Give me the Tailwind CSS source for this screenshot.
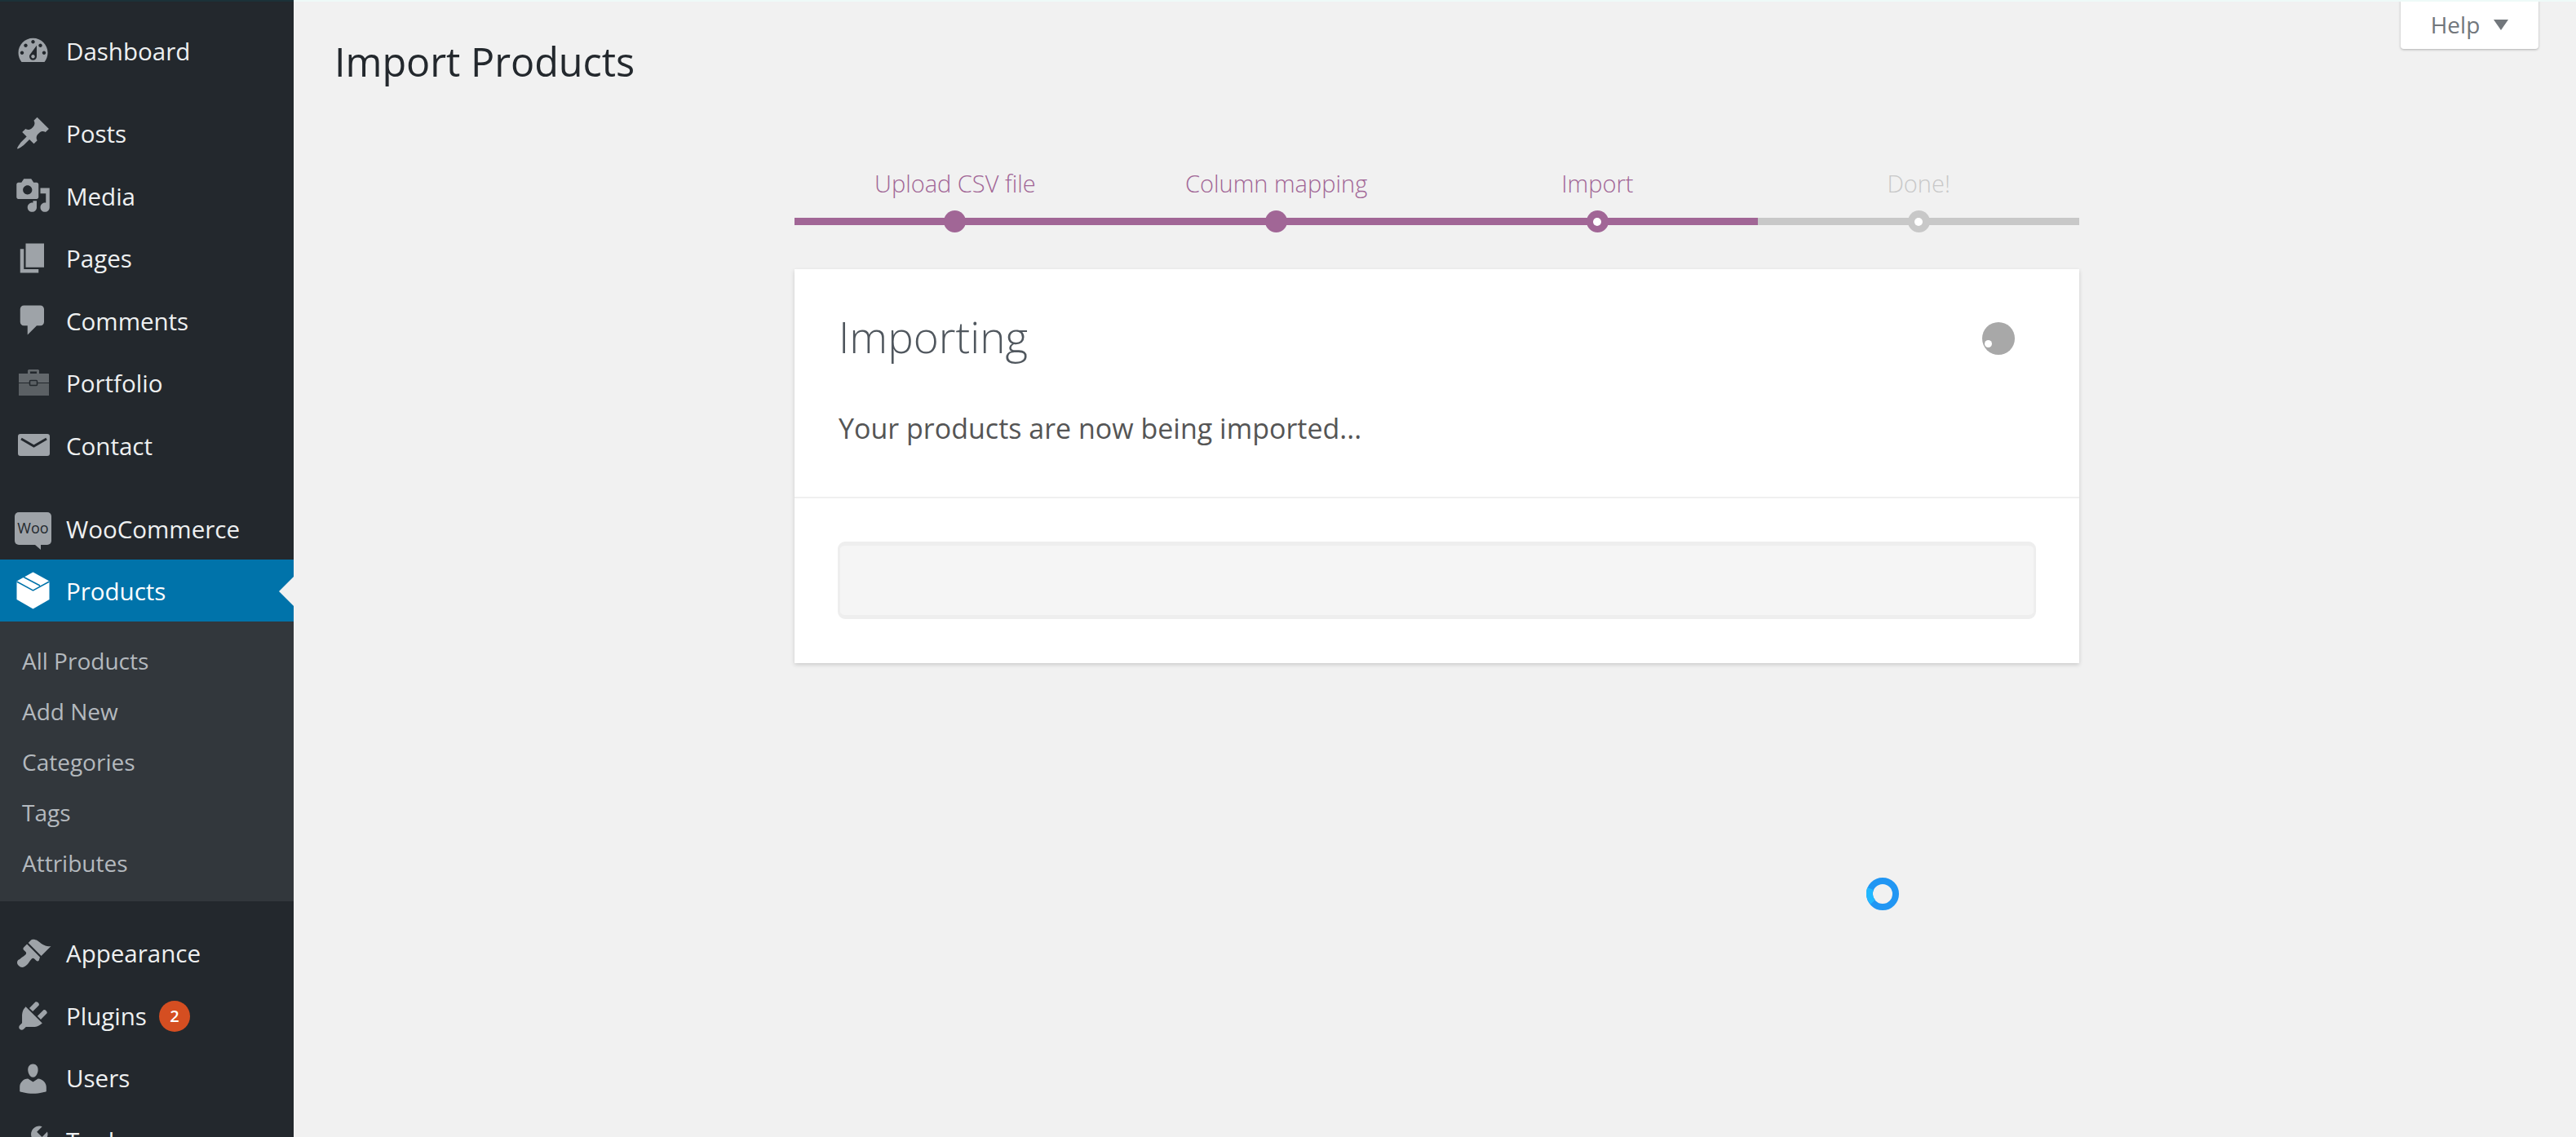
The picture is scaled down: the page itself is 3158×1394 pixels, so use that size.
<!DOCTYPE html>
<html lang="en">
  <head>
    <meta charset="UTF-8" />
    <title>Import Products</title>
    <script src="https://cdn.jsdelivr.net/npm/@tailwindcss/browser@4"></script>
  </head>
  <body class="relative flex h-[1394px] overflow-hidden bg-[#f1f1f1] font-['Open_Sans',sans-serif]">
    <!-- Sidebar -->
    <aside class="w-[360px] shrink-0 bg-[#23282d] text-[29.5px] text-[#eef0f1]">
      <div class="h-[24px]"></div>
      <a class="flex h-[76.5px] items-center">
        <svg class="ml-[18px] h-[45px] w-[45px] fill-[#9ea3a8]" fill-rule="evenodd" viewBox="0 0 20 20"><path d="M3.76 16h12.48c1.1-1.37 1.76-3.11 1.76-5 0-4.42-3.58-8-8-8s-8 3.58-8 8c0 1.89.66 3.63 1.76 5zM10 4c.55 0 1 .45 1 1s-.45 1-1 1-1-.45-1-1 .45-1 1-1zM6 6c.55 0 1 .45 1 1s-.45 1-1 1-1-.45-1-1 .45-1 1-1zm8 0c.55 0 1 .45 1 1s-.45 1-1 1-1-.45-1-1 .45-1 1-1zm-5.37 5.55L12 7v6c0 1.1-.9 2-2 2s-2-.9-2-2c0-.57.24-1.08.63-1.45zM4 10c.55 0 1 .45 1 1s-.45 1-1 1-1-.45-1-1 .45-1 1-1zm12 0c.55 0 1 .45 1 1s-.45 1-1 1-1-.45-1-1 .45-1 1-1zm-5 3c0-.55-.45-1-1-1s-1 .45-1 1 .45 1 1 1 1-.45 1-1z"/></svg>
        <span class="ml-[18px] pt-[2px]">Dashboard</span>
      </a>
      <div class="h-[24.5px]"></div>
      <a class="flex h-[76.5px] items-center">
        <svg class="ml-[18px] h-[45px] w-[45px] fill-[#9ea3a8]" viewBox="0 0 20 20"><path d="M10.44 3.02l1.82-1.82 6.36 6.35-1.83 1.82c-1.05-.68-2.48-.57-3.41.36l-.75.75c-.92.93-1.04 2.35-.35 3.41l-1.83 1.82-2.41-2.41-2.8 2.79c-.42.42-3.38 2.71-3.8 2.29s1.86-3.39 2.28-3.81l2.79-2.79L4.1 9.36l1.83-1.82c1.05.69 2.48.57 3.4-.36l.75-.75c.93-.92 1.05-2.35.36-3.41z"/></svg>
        <span class="ml-[18px] pt-[2px]">Posts</span>
      </a>
      <a class="flex h-[76.5px] items-center">
        <svg class="ml-[18px] h-[45px] w-[45px] fill-[#9ea3a8]" fill-rule="evenodd" viewBox="0 0 20 20"><path d="M13 11V4c0-.55-.45-1-1-1h-1.67L9 1H5L3.67 3H2c-.55 0-1 .45-1 1v7c0 .55.45 1 1 1h10c.55 0 1-.45 1-1zM7 4.5c1.38 0 2.5 1.12 2.5 2.5S8.38 9.5 7 9.5 4.5 8.38 4.5 7 5.62 4.5 7 4.5zM14 6h5v10.5c0 1.38-1.12 2.5-2.5 2.5S14 17.88 14 16.5s1.12-2.5 2.5-2.5c.17 0 .34.02.5.05V9h-3V6zm-4 8.05V13h2v3.5c0 1.38-1.12 2.5-2.5 2.5S7 17.88 7 16.5 8.12 14 9.5 14c.17 0 .34.02.5.05z"/></svg>
        <span class="ml-[18px] pt-[2px]">Media</span>
      </a>
      <a class="flex h-[76.5px] items-center">
        <svg class="ml-[18px] h-[45px] w-[45px] fill-[#9ea3a8]" viewBox="0 0 20 20"><path d="M6 15V2h10v13H6zm-1 1h8v2H3V5h2v11z"/></svg>
        <span class="ml-[18px] pt-[2px]">Pages</span>
      </a>
      <a class="flex h-[76.5px] items-center">
        <svg class="ml-[18px] h-[45px] w-[45px] fill-[#9ea3a8]" viewBox="0 0 20 20"><path d="M5 2h9c1.1 0 2 .9 2 2v7c0 1.1-.9 2-2 2h-2l-5 5v-5H5c-1.1 0-2-.9-2-2V4c0-1.1.9-2 2-2z"/></svg>
        <span class="ml-[18px] pt-[2px]">Comments</span>
      </a>
      <a class="flex h-[76.5px] items-center">
        <svg class="ml-[18px] h-[45px] w-[45px]" viewBox="0 0 45 45"><path fill="#63686c" d="M5 11h11V7.5C16 6.5 17 6 18 6h10c1 0 2 .5 2 1.5V11h11c.6 0 1 .4 1 1v10H5zM19 8.5V11h8V8.5z" fill-rule="evenodd"/><path fill="#5b6064" d="M5 23h13v-2h10v2h14v15H5z"/><rect x="18.5" y="19.5" width="9" height="6" rx="1" fill="none" stroke="#23282d" stroke-width="1.5"/></svg>
        <span class="ml-[18px] pt-[2px]">Portfolio</span>
      </a>
      <a class="flex h-[76.5px] items-center">
        <svg class="ml-[18px] h-[45px] w-[45px]" viewBox="0 0 45 45"><rect x="4" y="9" width="39" height="27" rx="3" fill="#9ea3a8"/><path d="M8 15l15.5 9L39 15" fill="none" stroke="#23282d" stroke-width="3"/></svg>
        <span class="ml-[18px] pt-[2px]">Contact</span>
      </a>
      <div class="h-[26px]"></div>
      <a class="flex h-[76px] items-center">
        <span class="relative ml-[18px] flex h-[40px] w-[45px] items-center justify-center rounded-[5px] bg-[#9ea3a8] pb-[3px] text-[18px] leading-none text-[#23282d]">Woo<span class="absolute right-[13px] bottom-[-6px] h-0 w-0 border-t-[6px] border-l-[7px] border-t-[#9ea3a8] border-l-transparent"></span></span>
        <span class="ml-[18px] pt-[2px]">WooCommerce</span>
      </a>
      <a class="relative flex h-[76px] items-center bg-[#0073aa] text-white">
        <svg class="ml-[20px] h-[46px] w-[41px]" viewBox="0 0 41 46"><path fill="#fff" d="M20.5 0.5L40.5 11.5V34L20.5 45.5L0.5 34V11.5z"/><path d="M0.5 12L20.5 23L40.5 12M9 6.500L29 17" fill="none" stroke="#0073aa" stroke-width="1.5"/></svg>
        <span class="ml-[20px] pt-[2px]">Products</span>
        <span class="absolute top-[21px] right-0 h-0 w-0 border-y-[18px] border-r-[18px] border-y-transparent border-r-[#f1f1f1]"></span>
      </a>
      <ul class="bg-[#32373c] pt-[17px] pb-[16px] text-[28px] text-[#b4b9be]">
        <li class="flex h-[62px] items-center pl-[27px]">All Products</li>
        <li class="flex h-[62px] items-center pl-[27px]">Add New</li>
        <li class="flex h-[62px] items-center pl-[27px]">Categories</li>
        <li class="flex h-[62px] items-center pl-[27px]">Tags</li>
        <li class="flex h-[62px] items-center pl-[27px]">Attributes</li>
      </ul>
      <div class="h-[26px]"></div>
      <a class="flex h-[76.5px] items-center">
        <svg class="ml-[18px] h-[45px] w-[45px] fill-[#9ea3a8]" viewBox="0 0 20 20"><path d="M14.48 11.06L7.41 3.99l1.5-1.5c.5-.56 2.3-.47 3.51.32 1.21.8 1.43 1.28 2.91 2.1 1.18.64 2.45 1.26 4.45.85zm-.71.71L6.7 4.7 4.93 6.47c-.39.39-.39 1.02 0 1.41l1.06 1.06c.39.39.39 1.03 0 1.42-.6.6-1.43 1.11-2.21 1.69-.35.26-.7.53-1.01.84C1.43 13.23.65 14.89 2.2 16.44c1.55 1.55 3.2.77 4.55-.58.3-.31.58-.66.84-1.01.58-.78 1.09-1.61 1.69-2.21.39-.39 1.03-.39 1.42 0l1.06 1.06c.39.39 1.02.39 1.41 0z"/></svg>
        <span class="ml-[18px]">Appearance</span>
      </a>
      <a class="flex h-[76.5px] items-center">
        <svg class="ml-[18px] h-[45px] w-[45px] fill-[#9ea3a8]" viewBox="0 0 20 20"><path d="M13.11 4.36L9.87 7.6 8 5.73l3.24-3.24c.35-.34 1.05-.2 1.56.32.52.51.66 1.21.31 1.55zm-8 1.77l.91-1.12 9.01 9.01-1.19.84c-.71.71-2.63 1.16-3.82 1.16H6.14L4.9 17.26c-.59.59-1.54.59-2.12 0-.59-.58-.59-1.53 0-2.12l1.24-1.24v-3.88c0-1.13.4-3.19 1.09-3.89zm7.26 3.97l3.24-3.24c.34-.35 1.04-.21 1.55.31.52.51.66 1.21.31 1.55l-3.24 3.25z"/></svg>
        <span class="ml-[18px]">Plugins</span>
        <span class="ml-[15px] flex h-[38px] w-[38px] items-center justify-center rounded-full bg-[#d54e21] text-[20px] font-semibold text-white">2</span>
      </a>
      <a class="flex h-[76.5px] items-center">
        <svg class="ml-[18px] h-[45px] w-[45px] fill-[#9ea3a8]" viewBox="0 0 20 20"><path d="M10 9.25c-2.27 0-2.73-3.44-2.73-3.44C7 4.02 7.82 2 9.97 2c2.16 0 2.98 2.02 2.71 3.81 0 0-.41 3.44-2.68 3.44zm0 2.57L12.72 10c2.39 0 4.52 2.33 4.52 4.53v2.49s-3.65 1.13-7.24 1.13c-3.65 0-7.24-1.13-7.24-1.13v-2.49c0-2.25 1.94-4.48 4.47-4.48z"/></svg>
        <span class="ml-[18px]">Users</span>
      </a>
      <a class="flex h-[76.5px] items-center">
        <svg class="ml-[18px] h-[45px] w-[45px] fill-[#9ea3a8]" viewBox="0 0 20 20"><path d="M16.68 9.77c-1.34 1.34-3.3 1.67-4.95.99l-5.41 6.52c-.99.99-2.59.99-3.58 0s-.99-2.59 0-3.57l6.52-5.42c-.68-1.65-.35-3.61.99-4.95 1.28-1.28 3.12-1.62 4.72-1.06l-2.89 2.89 2.82 2.82 2.86-2.87c.53 1.58.18 3.39-1.08 4.65z"/></svg>
        <span class="ml-[18px]">Tools</span>
      </a>
    </aside>

    <!-- Content -->
    <main class="min-w-0 flex-1">
      <div class="flex h-[204px] items-start justify-between pr-[46px] pl-[50px]">
        <h1 class="mt-[45px] text-[48.5px] leading-[60px] font-normal text-[#23282d]">Import Products</h1>
        <button class="flex h-[60px] w-[169px] items-center justify-center gap-[17px] rounded-b-[4px] bg-white text-[28px] text-[#72777c] shadow-[0_1px_3px_rgba(0,0,0,0.28)]">
          Help
          <span class="h-0 w-0 border-x-[9px] border-t-[13px] border-x-transparent border-t-[#72777c]"></span>
        </button>
      </div>

      <div class="ml-[614px] w-[1575px]">
        <!-- Steps -->
        <ol class="grid grid-cols-4 text-center text-[29px] font-light">
          <li class="text-[#a16696]">
            <div class="h-[54px] leading-[42px]">Upload CSV file</div>
            <div class="relative flex h-[27px] items-center justify-center">
              <div class="absolute inset-x-0 h-[9px] bg-[#a16696]"></div>
              <div class="relative h-[27px] w-[27px] rounded-full bg-[#a16696]"></div>
            </div>
          </li>
          <li class="text-[#a16696]">
            <div class="h-[54px] leading-[42px]">Column mapping</div>
            <div class="relative flex h-[27px] items-center justify-center">
              <div class="absolute inset-x-0 h-[9px] bg-[#a16696]"></div>
              <div class="relative h-[27px] w-[27px] rounded-full bg-[#a16696]"></div>
            </div>
          </li>
          <li class="text-[#a16696]">
            <div class="h-[54px] leading-[42px]">Import</div>
            <div class="relative flex h-[27px] items-center justify-center">
              <div class="absolute inset-x-0 h-[9px] bg-[#a16696]"></div>
              <div class="relative flex h-[27px] w-[27px] items-center justify-center rounded-full bg-[#a16696]"><div class="h-[10px] w-[10px] rounded-full bg-white"></div></div>
            </div>
          </li>
          <li class="text-[#c8c8c8]">
            <div class="h-[54px] leading-[42px]">Done!</div>
            <div class="relative flex h-[27px] items-center justify-center">
              <div class="absolute inset-x-0 h-[9px] bg-[#c8c8c8]"></div>
              <div class="relative flex h-[27px] w-[27px] items-center justify-center rounded-full bg-[#c8c8c8]"><div class="h-[10px] w-[10px] rounded-full bg-white"></div></div>
            </div>
          </li>
        </ol>

        <!-- Card -->
        <section class="mt-[45px] bg-white shadow-[0_2px_5px_rgba(0,0,0,0.16)]">
          <div class="h-[281px] border-b-[2px] border-[#f0f0f0] pt-[53px] pr-[79px] pl-[54px]">
            <div class="flex h-[60px] items-center justify-between">
              <h2 class="text-[53px] font-light text-[#50575e]">Importing</h2>
              <div class="relative mt-[4px] h-[40px] w-[40px] rounded-full bg-[#a8a8a8]">
                <div class="absolute top-[22px] left-[3px] h-[9px] w-[9px] rounded-full bg-white"></div>
              </div>
            </div>
            <p class="mt-[59px] text-[34px] leading-[46px] text-[#555555]">Your products are now being imported...</p>
          </div>
          <div class="px-[53px] pt-[53px] pb-[54px]">
            <div class="h-[95px] rounded-[9px] border-x-[3px] border-y-[5px] border-[#eeeeee] bg-[#f5f5f5]"></div>
          </div>
        </section>
      </div>
    </main>

    <!-- Thin strip along the top edge -->
    <div class="absolute inset-x-0 top-0 flex h-[2px]">
      <div class="w-[360px] bg-[#1b3238]"></div>
      <div class="flex-1 bg-[#eefaf8]"></div>
    </div>

    <!-- Busy cursor -->
    <svg class="absolute top-[1076px] left-[2288px] h-[40px] w-[40px]" viewBox="0 0 40 40">
      <circle cx="20" cy="20" r="16" fill="none" stroke="#2196f3" stroke-width="8"/>
      <path d="M5 13.5A16 16 0 0 0 8 30" fill="none" stroke="#22b8ff" stroke-width="8"/>
    </svg>
  </body>
</html>
